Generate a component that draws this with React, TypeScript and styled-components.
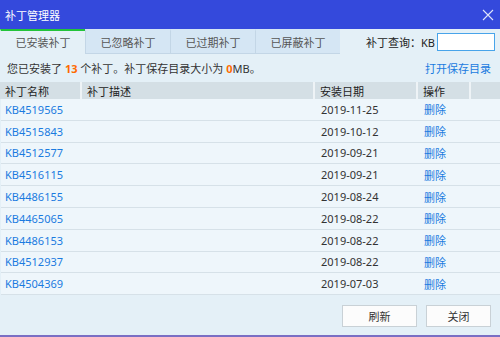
import styled, { createGlobalStyle } from 'styled-components';

const GlobalStyle = createGlobalStyle`
    html, body {
        margin: 0;
        padding: 0;
        background: #e4f0f7;
    }
    body {
        font-family: "Noto Sans", "Noto Sans CJK SC", sans-serif;
        font-size: 11px;
        color: #333;
    }
`

const Window = styled.div`
    width: 500px;
    height: 337px;
    display: flex;
    flex-direction: column;
    background: #e4f0f7;
    border-bottom: 2px solid #7a6fc4;
    box-sizing: border-box;
    overflow: hidden;
`

const TitleBar = styled.div`
    height: 29px;
    flex-shrink: 0;
    background: #3449dc;
    color: #fff;
    display: flex;
    align-items: center;
    justify-content: space-between;
    padding: 0 6px 0 5px;
    font-size: 11px;
`

const TabBar = styled.div`
    height: 25px;
    display: flex;
    align-items: stretch;
    background: #e4f0f7;
`

const Tab = styled.div<{ $active?: boolean }>`
    width: 85px;
    display: flex;
    align-items: center;
    justify-content: center;
    color: #555;
    box-sizing: border-box;
    background: ${p => (p.$active ? '#e4f0f7' : '#d5e6f4')};
    border-top: 2px solid ${p => (p.$active ? '#22c33a' : '#d5e6f4')};
    border-bottom: 1px solid ${p => (p.$active ? 'transparent' : '#c3d6e6')};
    border-left: 1px solid ${p => (p.$active ? 'transparent' : '#c3d6e6')};
`

const Search = styled.div`
    flex: 1;
    display: flex;
    align-items: center;
    justify-content: flex-end;
    gap: 2px;
    padding-right: 5px;
    color: #222;
`

const SearchInput = styled.div`
    width: 56px;
    height: 16px;
    background: #fff;
    border: 1px solid #48a4ea;
`

const InfoLine = styled.div`
    display: flex;
    justify-content: space-between;
    align-items: center;
    padding: 6px 9px 0 7px;
    height: 22px;
    box-sizing: border-box;
    color: #333;
`

const Num = styled.span`
    color: #ff6a00;
    font-weight: bold;
`

const Link = styled.span`
    color: #1a7be0;
`

const Table = styled.div`
    margin-top: 6px;
    display: flex;
    flex-direction: column;
`

const Columns = `
    display: grid;
    grid-template-columns: 82px 233px 103px 53px 1fr;
`

const HeaderRow = styled.div`
    ${Columns}
    height: 17px;
    background: #d4dfe5;
    color: #222;
    align-items: center;
`

const HeadCell = styled.div<{ $last?: boolean }>`
    padding-left: 5px;
    height: 100%;
    display: flex;
    align-items: center;
    border-right: ${p => (p.$last ? 'none' : '2px solid #eef3f6')};
`

const Row = styled.div`
    ${Columns}
    height: 21.8px;
    align-items: center;
    background: #eef6fb;
    border-bottom: 1px solid #d6e1e8;
    box-sizing: border-box;
    margin-left: 1px;
`

const Cell = styled.div<{ $link?: boolean; $indent?: number }>`
    padding-left: ${p => p.$indent ?? 5}px;
    color: ${p => (p.$link ? '#1a7be0' : '#333')};
    white-space: nowrap;
`

const Footer = styled.div`
    flex: 1;
    display: flex;
    justify-content: flex-end;
    align-items: flex-start;
    gap: 9px;
    padding: 10px 9px 0 0;
`

const Button = styled.div<{ $w: number }>`
    width: ${p => p.$w}px;
    height: 20px;
    background: #fcfcfc;
    border: 1px solid #c9d1d6;
    display: flex;
    align-items: center;
    justify-content: center;
    color: #333;
`

const patches = [
    ['KB4519565', '2019-11-25'],
    ['KB4515843', '2019-10-12'],
    ['KB4512577', '2019-09-21'],
    ['KB4516115', '2019-09-21'],
    ['KB4486155', '2019-08-24'],
    ['KB4465065', '2019-08-22'],
    ['KB4486153', '2019-08-22'],
    ['KB4512937', '2019-08-22'],
    ['KB4504369', '2019-07-03'],
]

export default function App() {
    return (
        <Window>
            <GlobalStyle />
            <TitleBar>
                <span>补丁管理器</span>
                <svg width="12" height="12" viewBox="0 0 12 12">
                    <path d="M1 1L11 11M11 1L1 11" stroke="#dfe4fa" strokeWidth="1.1" />
                </svg>
            </TitleBar>
            <TabBar>
                <Tab $active>已安装补丁</Tab>
                <Tab>已忽略补丁</Tab>
                <Tab>已过期补丁</Tab>
                <Tab>已屏蔽补丁</Tab>
                <Search>
                    <span>补丁查询：KB</span>
                    <SearchInput />
                </Search>
            </TabBar>
            <InfoLine>
                <span>
                    您已安装了 <Num>13</Num> 个补丁。补丁保存目录大小为 <Num>0</Num>MB。
                </span>
                <Link>打开保存目录</Link>
            </InfoLine>
            <Table>
                <HeaderRow>
                    <HeadCell>补丁名称</HeadCell>
                    <HeadCell>补丁描述</HeadCell>
                    <HeadCell>安装日期</HeadCell>
                    <HeadCell>操作</HeadCell>
                    <HeadCell $last />
                </HeaderRow>
                {patches.map(([kb, date]) => (
                    <Row key={kb}>
                        <Cell $link $indent={4}>{kb}</Cell>
                        <Cell />
                        <Cell>{date}</Cell>
                        <Cell $link>删除</Cell>
                        <Cell />
                    </Row>
                ))}
            </Table>
            <Footer>
                <Button $w={73}>刷新</Button>
                <Button $w={63}>关闭</Button>
            </Footer>
        </Window>
    )
}
